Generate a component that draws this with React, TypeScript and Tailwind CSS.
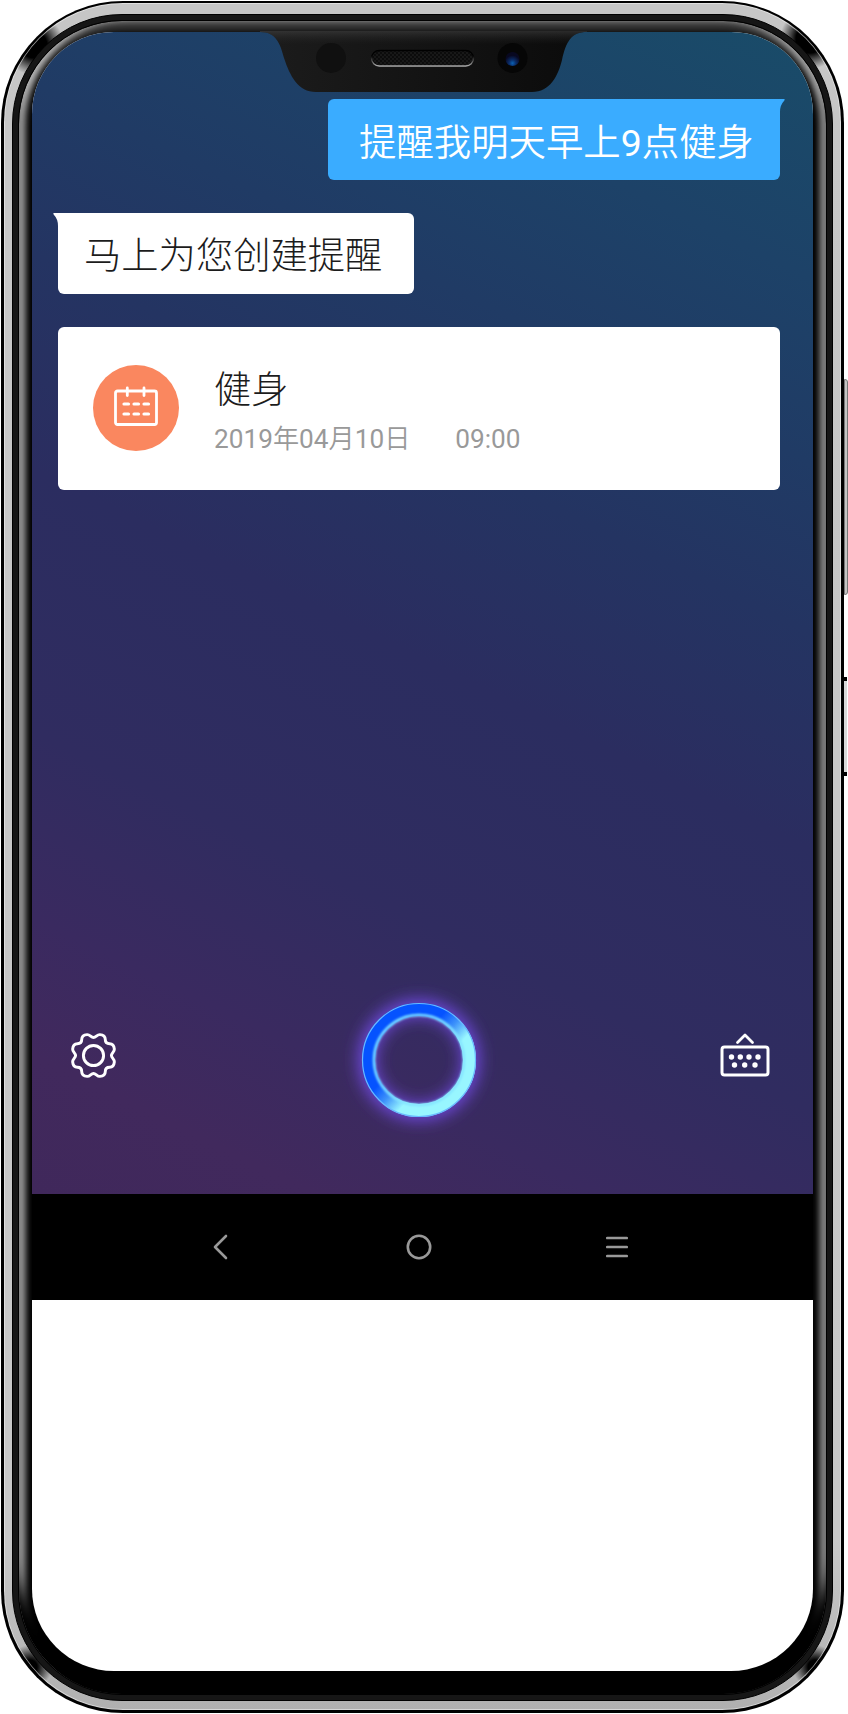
import React from "react";

const FONT = "font-[Roboto,'Noto_Sans_CJK_SC',sans-serif]";

function Notch() {
  return (
    <svg className="absolute left-[259px] top-[28px] z-10" width="330" height="66" viewBox="259 28 330 66">
      <defs>
        <linearGradient id="notchX" x1="0" x2="1" y1="0" y2="0">
          <stop offset="0" stopColor="#1c1c1c" />
          <stop offset="1" stopColor="#0b0b0b" />
        </linearGradient>
        <linearGradient id="notchY" x1="0" x2="0" y1="0" y2="1">
          <stop offset="0" stopColor="#4a4a4a" stopOpacity="0.5" />
          <stop offset="0.22" stopColor="#2a2a2a" stopOpacity="0" />
        </linearGradient>
        <pattern id="mesh" width="4" height="4" patternUnits="userSpaceOnUse">
          <rect width="4" height="4" fill="#181818" />
          <circle cx="1" cy="1" r="0.9" fill="#050505" />
          <circle cx="3" cy="3" r="0.9" fill="#050505" />
        </pattern>
        <linearGradient id="rim" x1="0" x2="0" y1="0" y2="1">
          <stop offset="0.35" stopColor="#000" />
          <stop offset="1" stopColor="#aaa" />
        </linearGradient>
        <radialGradient id="lens" cx="0.5" cy="0.8" r="0.7">
          <stop offset="0" stopColor="#0a62b4" />
          <stop offset="0.35" stopColor="#0a2c68" />
          <stop offset="0.8" stopColor="#080820" />
        </radialGradient>
      </defs>
      <path d="M260 31V32C276 32 280 43 284 58C290 76 298 92 316 92H532C550 92 558 76 562 60C566 42 571 32 587 32V31Z" fill="url(#notchX)" />
      <path d="M260 31V32C276 32 280 43 284 58C290 76 298 92 316 92H532C550 92 558 76 562 60C566 42 571 32 587 32V31Z" fill="url(#notchY)" />
      <circle cx="331" cy="58" r="15" fill="#101010" />
      <rect x="371.500" y="50.500" width="102" height="15.500" rx="7.750" fill="url(#mesh)" stroke="url(#rim)" strokeWidth="1.300" />
      <circle cx="512.500" cy="58" r="15" fill="#060606" />
      <circle cx="512.500" cy="59" r="7" fill="url(#lens)" />
    </svg>
  );
}

function CalendarIcon() {
  return (
    <svg width="46" height="42" viewBox="0 0 46 42" fill="none" stroke="#fff" strokeLinecap="round">
      <rect x="2.500" y="6" width="41" height="33.500" rx="2" strokeWidth="2.800" />
      <path d="M14.300 3v7.500M31 3v7.500" strokeWidth="2.800" />
      <path d="M11 19h4.500M21 19h4.500M31 19h4.500M11 29h4.500M21 29h4.500M31 29h4.500" strokeWidth="3.200" />
    </svg>
  );
}

function GearIcon() {
  return (
    <svg className="mb-[10px]" width="47" height="47" viewBox="-24 -24 48 48" fill="none" stroke="#fff" strokeWidth="3" strokeLinejoin="round">
      <circle r="10.300" />
      <path d="M0 -18.300C2.500 -18.300 3.600 -21.500 6.500 -21.300C10 -21 12 -19.400 12 -16.500C12 -13.500 13.500 -12 16.500 -12C19.400 -12 21 -10 21.300 -6.500C21.500 -3.600 18.300 -2.500 18.300 0C18.300 2.500 21.500 3.600 21.300 6.500C21 10 19.400 12 16.500 12C13.500 12 12 13.500 12 16.500C12 19.400 10 21 6.500 21.300C3.600 21.500 2.500 18.300 0 18.300C-2.500 18.300 -3.600 21.500 -6.500 21.300C-10 21 -12 19.400 -12 16.500C-12 13.500 -13.500 12 -16.500 12C-19.400 12 -21 10 -21.300 6.500C-21.500 3.600 -18.300 2.500 -18.300 0C-18.300 -2.500 -21.500 -3.600 -21.300 -6.500C-21 -10 -19.400 -12 -16.500 -12C-13.500 -12 -12 -13.500 -12 -16.500C-12 -19.400 -10 -21 -6.500 -21.300C-3.600 -21.500 -2.500 -18.300 0 -18.300Z" />
    </svg>
  );
}

function VoiceRing() {
  return (
    <svg width="160" height="160" viewBox="-80 -80 160 160" fill="none">
      <defs>
        <linearGradient id="ring" x1="0.150" y1="0.180" x2="0.850" y2="0.820">
          <stop offset="0.360" stopColor="#0553ff" />
          <stop offset="0.520" stopColor="#3d92fa" />
          <stop offset="0.700" stopColor="#98f6ff" />
        </linearGradient>
        <filter id="glow" x="-50%" y="-50%" width="200%" height="200%">
          <feGaussianBlur stdDeviation="8" />
        </filter>
        <filter id="soft" x="-20%" y="-20%" width="140%" height="140%">
          <feGaussianBlur stdDeviation="0.8" />
        </filter>
      </defs>
      <circle r="52" stroke="#7048e0" strokeWidth="17" filter="url(#glow)" />
      <circle r="50.500" stroke="url(#ring)" strokeWidth="13" />
      <circle r="56.500" stroke="#69baff" strokeWidth="1.200" />
      <circle r="45" stroke="#84e4ff" strokeWidth="2.400" filter="url(#soft)" />
    </svg>
  );
}

function KeyboardIcon() {
  return (
    <svg className="mb-[11px]" width="50" height="46" viewBox="0 0 50 46" fill="none" stroke="#fff" strokeLinecap="round" strokeLinejoin="round">
      <path d="M17.500 10.500L25 3L32.500 10.500" strokeWidth="2.800" />
      <rect x="2" y="15" width="46" height="28" rx="2.500" strokeWidth="3" />
      <g fill="#fff" stroke="none">
        <circle cx="11.500" cy="25" r="2.700" />
        <circle cx="20.300" cy="25" r="2.700" />
        <circle cx="29" cy="25" r="2.700" />
        <circle cx="38" cy="25" r="2.700" />
        <circle cx="14.500" cy="33" r="2.700" />
        <circle cx="24.700" cy="33" r="2.700" />
        <circle cx="35" cy="33" r="2.700" />
      </g>
    </svg>
  );
}

function Chat() {
  return (
    <div className="flex flex-1 flex-col pt-[67px] pr-[33px] pl-[26px]">
      <div className="relative flex h-[81px] w-[452px] items-center self-end rounded-[6px] rounded-tr-none bg-[#3aacff] pt-[8px] pl-[31px]">
        <span className="text-[37.4px] font-[350] leading-none whitespace-nowrap text-white">
          提醒我明天早上<span className="font-normal">9</span>点健身
        </span>
        <svg className="absolute -right-[5px] top-0" width="6" height="14" viewBox="0 0 6 14">
          <path d="M0 0H5.500Q6 1 5 2Q1 6 1 13H0Z" fill="#3aacff" />
        </svg>
      </div>
      <div className="relative mt-[33px] flex h-[81px] w-[356px] items-center rounded-[6px] rounded-tl-none bg-white pt-[7px] pl-[26px]">
        <span className="text-[37.3px] font-light leading-none whitespace-nowrap text-[#1c1c1c]">马上为您创建提醒</span>
        <svg className="absolute -left-[5px] top-0" width="6" height="14" viewBox="0 0 6 14">
          <path d="M6 0H0.500Q0 1 1 2Q5 6 5 13H6Z" fill="#fff" />
        </svg>
      </div>
      <div className="mt-[33px] flex h-[163px] items-center rounded-[6px] bg-white pl-[35px]">
        <div className="mb-[2px] flex size-[86px] items-center justify-center rounded-full bg-[#fa875f] pb-[4px]">
          <CalendarIcon />
        </div>
        <div className="ml-[35px] flex flex-col gap-[16px] pt-[6px]">
          <span className="text-[37.3px] font-light leading-[38px] text-[#1c1c1c]">健身</span>
          <div className="flex gap-[45px] text-[26.2px] font-normal leading-[28px] text-[#999]">
            <span>
              2019<span className="font-[350]">年</span>04<span className="font-[350]">月</span>10<span className="font-[350]">日</span>
            </span>
            <span>09:00</span>
          </div>
        </div>
      </div>
    </div>
  );
}

export default function App() {
  return (
    <div className={`relative h-[1714px] w-[848px] overflow-hidden bg-white pl-px pt-px ${FONT}`}>
      <div className="absolute left-[844px] top-[379px] h-[216px] w-[4px] rounded-r-[3px] border border-[#777] bg-[#c4c4c4]" />
      <div className="absolute left-[844px] top-[677px] h-[99px] w-[3px] border-y-[4px] border-black bg-[#d8d8d8]" />
      <div className="h-[1712px] w-[843px] rounded-[122px] bg-black p-[3px] pt-[2px]">
        <div className="h-full rounded-[119px] bg-[radial-gradient(circle_at_30px_42px,#000_13px,transparent_30px),radial-gradient(circle_at_806px_36px,#000_14px,transparent_30px),radial-gradient(circle_at_26px_1664px,#000_7px,transparent_22px),radial-gradient(circle_at_811px_1664px,#000_7px,transparent_22px),linear-gradient(180deg,#c6c6c6_0%,#c8c8c8_90%,#b0b0b0_100%)] px-[8px] pt-[11px] pb-[9px] shadow-[inset_0_0_0_1px_rgba(240,240,240,0.6)]">
          <div className="h-full rounded-[110px] border border-black bg-[#161616] p-[5px]">
            <div className="h-full rounded-[104px] border border-black bg-black pt-[11px] pr-[14px] pb-[24px] pl-[13px] shadow-[inset_0_-42px_14px_-4px_#000,inset_9px_0_7px_-3px_#bdbdbd,inset_-9px_0_7px_-3px_#a8a8a8,inset_0_12px_10px_-3px_#444]">
              <div className="relative flex h-[1639px] w-[781px] flex-col overflow-hidden rounded-[82px] bg-white">
                <div className="flex h-[1162px] flex-col bg-[linear-gradient(206deg,#194c69_0%,#1d4268_16%,#203b65_28%,#243462_39%,#2b2d60_53%,#302c60_70%,#3a2a60_82%,#41295d_91%,#40285b_100%)]">
                  <Chat />
                  <div className="flex h-[268px] items-center justify-between pr-[43px] pl-[38px]">
                    <GearIcon />
                    <VoiceRing />
                    <KeyboardIcon />
                  </div>
                </div>
                <div className="flex h-[106px] items-center justify-between bg-black pr-[185px] pl-[181px]">
                  <svg width="15" height="26" viewBox="0 0 15 26" fill="none" stroke="#999" strokeWidth="2.600" strokeLinecap="round" strokeLinejoin="round">
                    <path d="M13 2L2 13L13 24" />
                  </svg>
                  <svg className="ml-[4px]" width="26" height="26" viewBox="0 0 26 26" fill="none" stroke="#999" strokeWidth="2.600">
                    <circle cx="13" cy="13" r="11.200" />
                  </svg>
                  <svg width="22" height="22" viewBox="0 0 22 22" fill="none" stroke="#999" strokeWidth="2.700" strokeLinecap="round">
                    <path d="M1.300 2H20.700M1.300 11H20.700M1.300 20H20.700" />
                  </svg>
                </div>
              </div>
            </div>
          </div>
        </div>
      </div>
      <Notch />
    </div>
  );
}
